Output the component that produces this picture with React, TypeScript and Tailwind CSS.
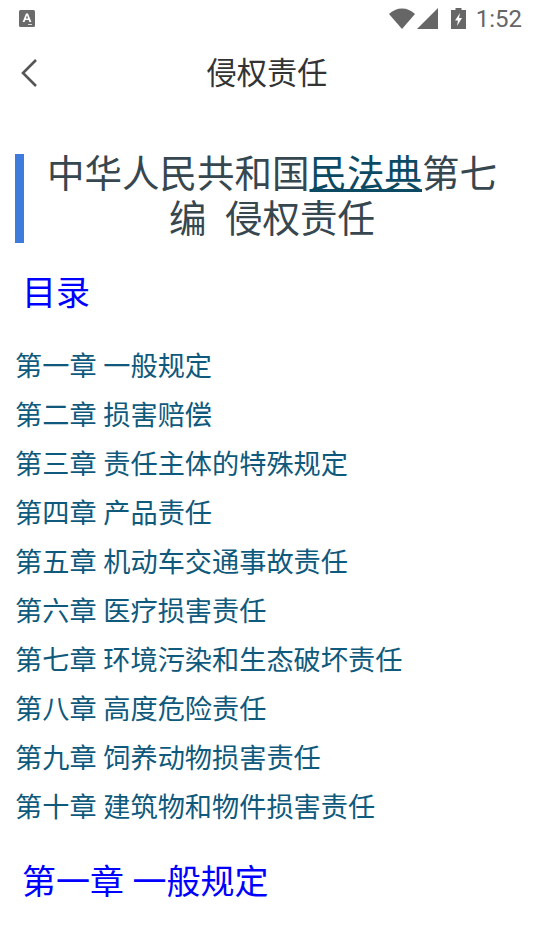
const CJK = "font-['Roboto','Noto_Sans_CJK_SC',sans-serif]";

const chapters = [
  "第一章 一般规定",
  "第二章 损害赔偿",
  "第三章 责任主体的特殊规定",
  "第四章 产品责任",
  "第五章 机动车交通事故责任",
  "第六章 医疗损害责任",
  "第七章 环境污染和生态破坏责任",
  "第八章 高度危险责任",
  "第九章 饲养动物损害责任",
  "第十章 建筑物和物件损害责任",
];

function StatusBar() {
  return (
    <div className="h-[37px] flex items-center pl-[19px] pr-[12px] text-[#666666]">
      <svg width="16" height="17" viewBox="0 0 16 17">
        <rect width="16" height="17" rx="1.5" fill="#6b6b6b" />
        <path d="M3.6 12 L7 3.5 H9 L12.4 12 H10.4 L9.7 10 H6.3 L5.6 12 Z M6.9 8.4 H9.1 L8 5.3 Z" fill="#fff" fillRule="evenodd" />
        <path d="M9 14 H13 V15 H9 Z" fill="#ddd" />
      </svg>
      <div className="flex-1" />
      <svg width="26" height="21" viewBox="0 0 26 21">
        <path d="M0 6 C7 -1.5 19 -1.5 26 6 L13 21 Z" fill="#666666" />
      </svg>
      <svg width="21" height="21" viewBox="0 0 21 21" className="ml-[2px]">
        <path d="M0 21 L21 0 V21 Z" fill="#666666" />
      </svg>
      <svg width="15" height="21" viewBox="0 0 15 21" className="ml-[13px]">
        <path d="M4.5 0 H10.5 V2 H15 V21 H0 V2 H4.5 Z" fill="#666666" />
        <path d="M9 5 L4 12.5 H7 L6 18 L11 10 H8 Z" fill="#fff" />
      </svg>
      <span className="ml-[10px] text-[24px] leading-[30px] font-['Roboto',sans-serif] text-[#666666]">1:52</span>
    </div>
  );
}

export default function App() {
  return (
    <div className={`w-[534px] h-[950px] overflow-hidden bg-white ${CJK}`}>
      <StatusBar />
      <div className="relative h-[72px] flex items-center justify-center pt-[2px]">
        <svg width="20" height="30" viewBox="0 0 20 30" className="absolute left-[20px] top-[21px]">
          <path d="M16 2 L3 15 L16 28" fill="none" stroke="#555555" strokeWidth="2.6" />
        </svg>
        <span className="text-[30.2px] leading-[40px] text-[#333333]">侵权责任</span>
      </div>
      <div className="flow-root mt-[45px] ml-[15px] mr-[15px] border-l-[9px] border-[#3d7cdc] h-[89px] pl-[15px] pr-[14px] text-center text-[37.5px] leading-[45px] text-[#37474f]">
        <div className="-mt-[2px]">
          中华人民共和国<a className="underline text-[#0c4a63]">民法典</a>第七编&nbsp;&nbsp;侵权责任
        </div>
      </div>
      <h2 className="mt-[25px] ml-[22px] text-[34px] leading-[50px] text-[#0000ff]">目录</h2>
      <ul className="mt-[25px] ml-[15px] text-[27.2px] leading-[49px] text-[#0f5a7c]">
        {chapters.map((c) => (
          <li key={c}>{c}</li>
        ))}
      </ul>
      <h2 className="mt-[24px] ml-[22px] text-[34px] leading-[50px] text-[#0000ff]">第一章 一般规定</h2>
    </div>
  );
}
